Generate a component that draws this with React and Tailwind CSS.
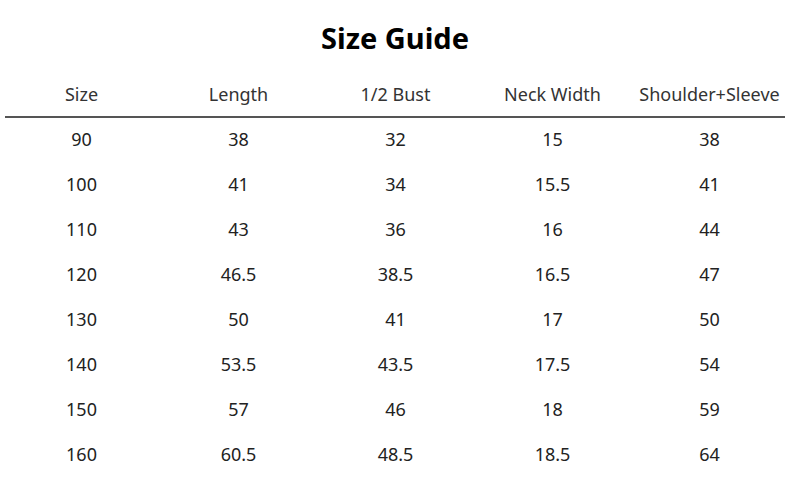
import React from "react";

const headers = ["Size", "Length", "1/2 Bust", "Neck Width", "Shoulder+Sleeve"];
const rows = [
  ["90", "38", "32", "15", "38"],
  ["100", "41", "34", "15.5", "41"],
  ["110", "43", "36", "16", "44"],
  ["120", "46.5", "38.5", "16.5", "47"],
  ["130", "50", "41", "17", "50"],
  ["140", "53.5", "43.5", "17.5", "54"],
  ["150", "57", "46", "18", "59"],
  ["160", "60.5", "48.5", "18.5", "64"],
];

export default function App() {
  return (
    <div
      className="w-[790px] h-[490px] bg-white text-[#222] overflow-hidden"
      style={{ fontFamily: '"Noto Sans", "Open Sans", sans-serif' }}
    >
      <div className="h-[56px] pt-[20px] text-center text-[29px] leading-[36px] font-bold text-black">
        Size Guide
      </div>
      <div className="grid grid-cols-5 pl-[3px] pr-[2px] pt-[23px] pb-[7px]">
        {headers.map((h) => (
          <div key={h} className="text-center text-[18px] leading-[30px] text-[#333]">
            {h}
          </div>
        ))}
      </div>
      <div className="mx-[5px] h-[2px] bg-[#555]" />
      <div className="pl-[3px] pr-[2px] -mt-[2px]">
        {rows.map((r, i) => (
          <div key={i} className="grid grid-cols-5 h-[45px] items-center">
            {r.map((c, j) => (
              <div key={j} className="text-center text-[18px] leading-[24px]">
                {c}
              </div>
            ))}
          </div>
        ))}
      </div>
    </div>
  );
}
